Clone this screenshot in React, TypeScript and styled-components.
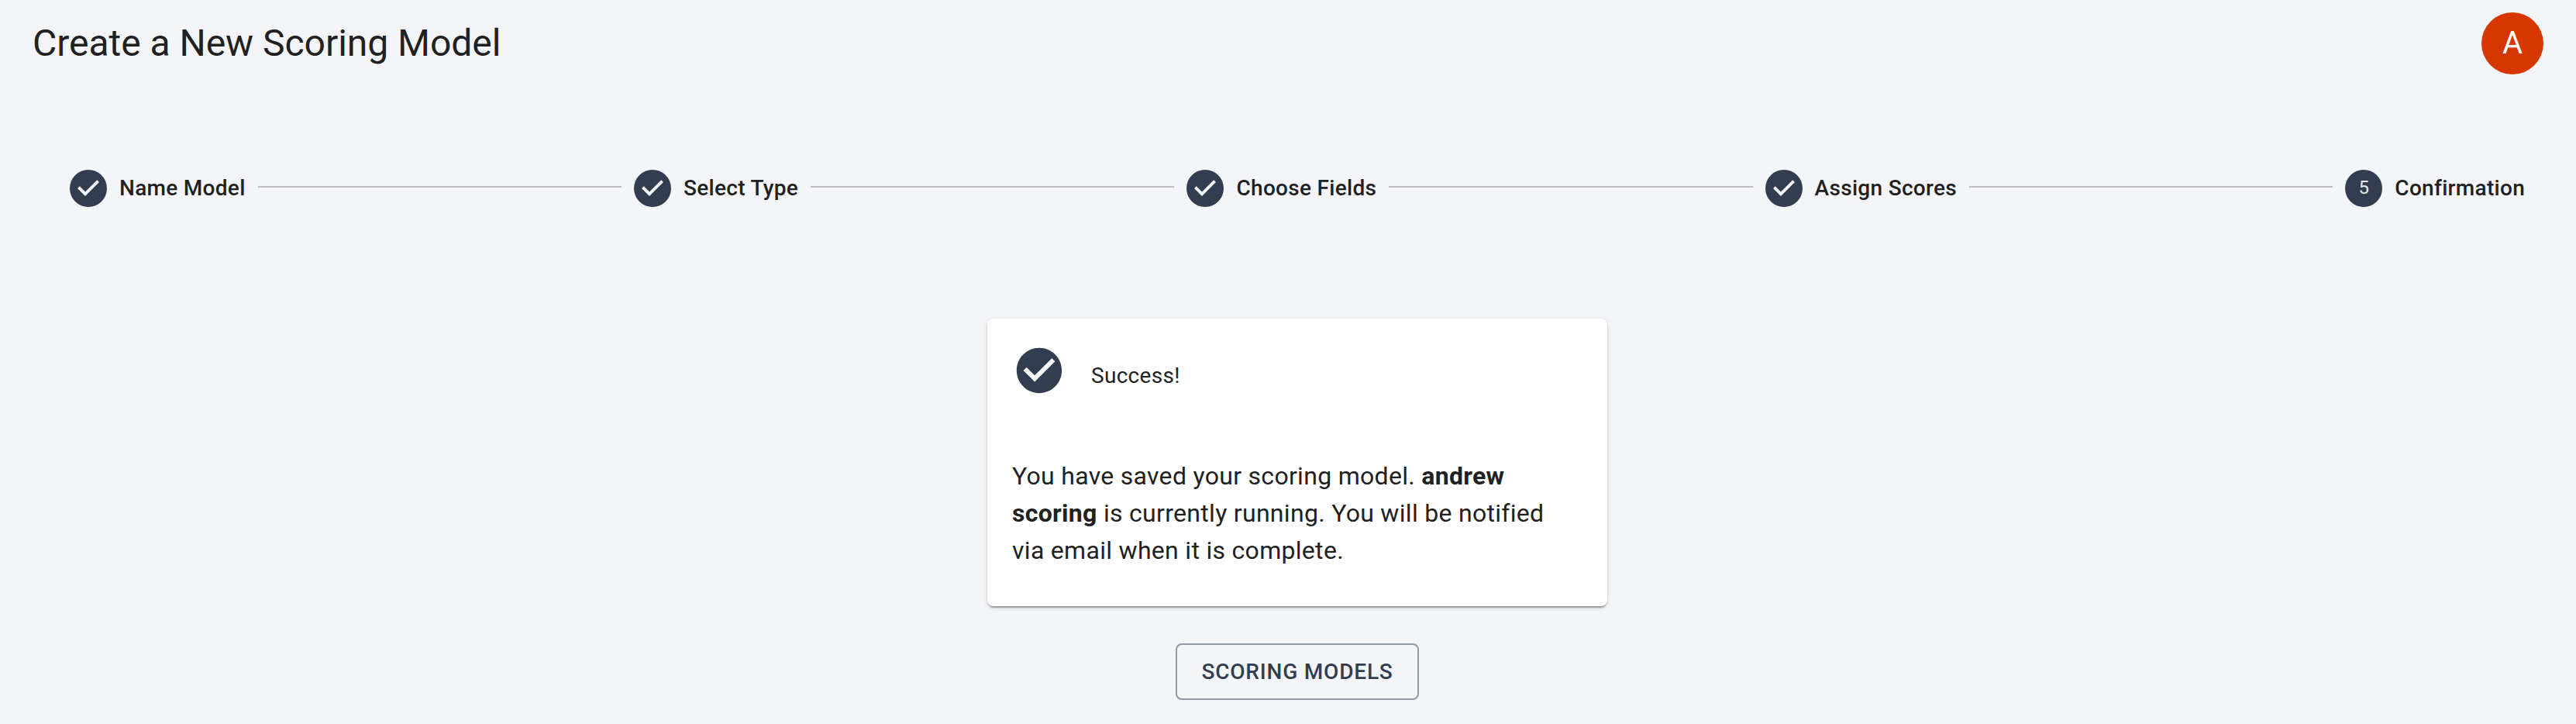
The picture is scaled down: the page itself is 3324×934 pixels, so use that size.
import React from 'react';
import styled, { createGlobalStyle } from 'styled-components';

const GlobalStyle = createGlobalStyle`
  *, *::before, *::after { box-sizing: border-box; }
  body {
    margin: 0;
    background: #f4f5f9;
    color: #212121;
    font-family: Roboto, "Liberation Sans", sans-serif;
    -webkit-font-smoothing: antialiased;
  }
`;

const Page = styled.div`
  min-height: 934px;
  display: flex;
  flex-direction: column;
`;

const Header = styled.header`
  display: flex;
  align-items: center;
  justify-content: space-between;
  height: 112px;
  padding: 0 42px;
`;

const Title = styled.h1`
  margin: 0;
  font-size: 48px;
  font-weight: 400;
  line-height: 64px;
  letter-spacing: -0.03px;
`;

const Avatar = styled.div`
  width: 80px;
  height: 80px;
  border-radius: 50%;
  background: #d63600;
  color: #fafafa;
  font-size: 40px;
  line-height: 80px;
  text-align: center;
`;

const Stepper = styled.ol`
  display: flex;
  align-items: center;
  height: 48px;
  margin: 107px 50px 0 74px;
  padding: 0;
  list-style: none;
`;

const Step = styled.li`
  display: flex;
  align-items: center;
  gap: 16px;
  padding: 0 16px;
`;

const StepLabel = styled.span`
  font-size: 28px;
  font-weight: 500;
  line-height: 40px;
  letter-spacing: 0.01071em;
  white-space: nowrap;
`;

const StepNumber = styled.span`
  width: 48px;
  height: 48px;
  border-radius: 50%;
  background: #323e50;
  color: #e4e6ea;
  font-size: 24px;
  line-height: 47px;
  text-align: center;
`;

const Connector = styled.li`
  flex: 1;
  height: 2px;
  margin-bottom: 4px;
  background: #bdbdbd;
`;

const Icon = styled.svg<{ $size: number }>`
  display: block;
  flex: none;
  width: ${({ $size }) => $size}px;
  height: ${({ $size }) => $size}px;
  fill: #323e50;
`;

const Content = styled.main`
  display: flex;
  flex-direction: column;
  align-items: center;
  gap: 48px;
  margin-top: 144px;
  padding-left: 24px;
`;

const Card = styled.section`
  width: 800px;
  height: 371px;
  padding: 32px;
  border-radius: 8px;
  background: #fff;
  box-shadow: 0 4px 2px -2px rgba(0, 0, 0, 0.2), 0 2px 2px 0 rgba(0, 0, 0, 0.14),
    0 2px 6px 0 rgba(0, 0, 0, 0.12);
`;

const CardHeader = styled.div`
  display: flex;
  align-items: center;
  gap: 32px;
`;

const CardTitle = styled.span`
  padding-top: 14px;
  font-size: 28px;
  line-height: 40px;
  letter-spacing: 0.01071em;
`;

const Message = styled.p`
  margin: 77px 0 0;
  font-size: 32px;
  line-height: 48px;
  letter-spacing: 0.00938em;
`;

const OutlinedButton = styled.button`
  min-width: 314px;
  padding: 10px 30px;
  border: 2px solid rgba(50, 62, 80, 0.5);
  border-radius: 8px;
  background: transparent;
  color: #323e50;
  font: 500 28px/49px Roboto, "Liberation Sans", sans-serif;
  letter-spacing: 0.02857em;
  text-transform: uppercase;
`;

const steps = ['Name Model', 'Select Type', 'Choose Fields', 'Assign Scores', 'Confirmation'];
const activeStep = 4;

const StepCheck = () => (
  <Icon $size={48} viewBox="0 0 24 24" aria-hidden="true">
    <path d="M12 0a12 12 0 1 0 0 24 12 12 0 0 0 0-24zm-2 17l-5-5 1.4-1.4 3.6 3.6 7.6-7.6L19 8l-9 9z" />
  </Icon>
);

const SuccessCheck = () => (
  <Icon $size={70} viewBox="0 0 24 24" aria-hidden="true">
    <path d="M12 2C6.48 2 2 6.48 2 12s4.48 10 10 10 10-4.48 10-10S17.52 2 12 2zm-2 15l-5-5 1.41-1.41L10 14.17l7.59-7.59L19 8l-9 9z" />
  </Icon>
);

export default function App() {
  return (
    <Page>
      <GlobalStyle />
      <Header>
        <Title>Create a New Scoring Model</Title>
        <Avatar>A</Avatar>
      </Header>
      <Stepper>
        {steps.map((label, i) => (
          <React.Fragment key={label}>
            {i > 0 && <Connector aria-hidden="true" />}
            <Step>
              {i < activeStep ? <StepCheck /> : <StepNumber>{i + 1}</StepNumber>}
              <StepLabel>{label}</StepLabel>
            </Step>
          </React.Fragment>
        ))}
      </Stepper>
      <Content>
        <Card>
          <CardHeader>
            <SuccessCheck />
            <CardTitle>Success!</CardTitle>
          </CardHeader>
          <Message>
            You have saved your scoring model. <b>andrew scoring</b> is currently running. You will be
            notified via email when it is complete.
          </Message>
        </Card>
        <OutlinedButton type="button">Scoring Models</OutlinedButton>
      </Content>
    </Page>
  );
}
